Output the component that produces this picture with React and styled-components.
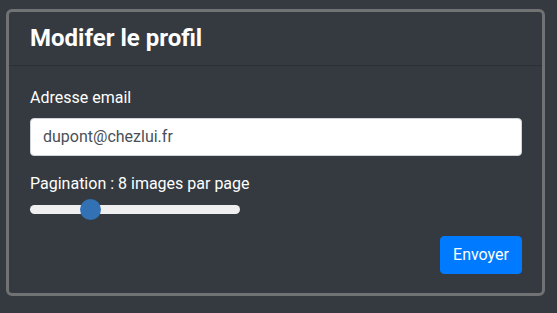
import styled, { createGlobalStyle } from 'styled-components'

const GlobalStyle = createGlobalStyle`
    html, body {
        margin: 0;
        background: #343a40;
        font-family: "Segoe UI", Roboto, "Open Sans", sans-serif;
        color: #ffffff;
    }
`;

const Page = styled.div`
    padding: 9px 0 0 6px;
`;

const Card = styled.form`
    width: 539px;
    box-sizing: border-box;
    border: 3px solid #717274;
    border-radius: 6px;
    background: #343a40;
`;

const CardHeader = styled.div`
    padding: 12px 21px;
    border-bottom: 1px solid #2b3035;
`;

const Title = styled.h4`
    margin: 0;
    font-size: 24px;
    font-weight: 700;
    line-height: 1.2;
`;

const CardBody = styled.div`
    padding: 20px 20px 19px 21px;
    display: flex;
    flex-direction: column;
`;

const FormGroup = styled.div`
    display: flex;
    flex-direction: column;
    margin-bottom: 16px;
`;

const Label = styled.label`
    font-size: 16px;
    line-height: 24px;
    margin-bottom: ${props => props.$tight ? '4px' : '8px'};
`;

const Input = styled.input`
    height: 38px;
    box-sizing: border-box;
    padding: 6px 12px;
    font-family: inherit;
    font-size: 16px;
    color: #495057;
    background: #fff;
    border: 1px solid #ced4da;
    border-radius: 4px;
    outline: none;
`;

const Range = styled.input`
    -webkit-appearance: none;
    appearance: none;
    width: 210px;
    height: 20px;
    margin: 0;
    background: transparent;

    &::-webkit-slider-runnable-track {
        height: 9px;
        background: #efefef;
        border-radius: 5px;
    }

    &::-webkit-slider-thumb {
        -webkit-appearance: none;
        width: 21px;
        height: 21px;
        margin-top: -6px;
        border-radius: 50%;
        background: #3271b3;
        border: none;
    }
`;

const Actions = styled.div`
    display: flex;
    justify-content: flex-end;
`;

const Button = styled.button`
    height: 38px;
    padding: 6px 12px;
    font-family: inherit;
    font-size: 16px;
    color: #fff;
    background: #007bff;
    border: 1px solid #007bff;
    border-radius: 4px;
`;

export default function App() {
    return (
        <Page>
            <GlobalStyle />
            <Card onSubmit={e => e.preventDefault()}>
                <CardHeader>
                    <Title>Modifer le profil</Title>
                </CardHeader>
                <CardBody>
                    <FormGroup>
                        <Label htmlFor="email">Adresse email</Label>
                        <Input id="email" type="email" defaultValue="dupont@chezlui.fr" />
                    </FormGroup>
                    <FormGroup>
                        <Label htmlFor="pagination" $tight>Pagination : 8 images par page</Label>
                        <Range id="pagination" type="range" min="0" max="30" defaultValue="8" />
                    </FormGroup>
                    <Actions>
                        <Button type="submit">Envoyer</Button>
                    </Actions>
                </CardBody>
            </Card>
        </Page>
    )
}
